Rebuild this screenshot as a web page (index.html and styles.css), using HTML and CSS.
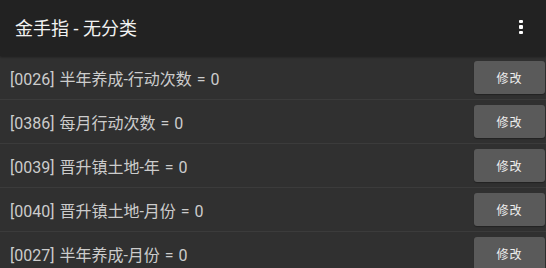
FILE: index.html
```html
<!DOCTYPE html>
<html lang="zh-CN">
<head>
    <meta charset="UTF-8">
    <meta name="viewport" content="width=device-width, initial-scale=1.0">
    <title>金手指 - 无分类</title>
    <link rel="stylesheet" href="styles.css">
</head>
<body>
    <div class="app">
        <div class="toolbar">
            <div class="title">金手指 - 无分类</div>
            <div class="menu">
                <span class="dot"></span>
                <span class="dot"></span>
                <span class="dot"></span>
            </div>
        </div>
        <div class="list">
            <div class="row">
                <div class="label">[0026] 半年养成-行动次数 = 0</div>
                <button class="edit">修改</button>
            </div>
            <div class="row">
                <div class="label">[0386] 每月行动次数 = 0</div>
                <button class="edit">修改</button>
            </div>
            <div class="row">
                <div class="label">[0039] 晋升镇土地-年 = 0</div>
                <button class="edit">修改</button>
            </div>
            <div class="row">
                <div class="label">[0040] 晋升镇土地-月份 = 0</div>
                <button class="edit">修改</button>
            </div>
            <div class="row">
                <div class="label">[0027] 半年养成-月份 = 0</div>
                <button class="edit">修改</button>
            </div>
        </div>
    </div>
</body>
</html>
```

FILE: styles.css
```css
body {
    margin: 0;
    background-color: #303030;
    font-family: Roboto, "Noto Sans CJK SC", sans-serif;
    overflow: hidden;
}

.app {
    width: 546px;
    height: 268px;
    overflow: hidden;
}

.toolbar {
    display: flex;
    align-items: center;
    justify-content: space-between;
    height: 56px;
    padding: 0 0 2px 15px;
    box-sizing: border-box;
    background-color: #222222;
    box-shadow: 0 1px 2px rgba(0, 0, 0, 0.4);
    position: relative;
}

.title {
    color: #f2f2f2;
    font-size: 18px;
    font-weight: 400;
}

.menu {
    display: flex;
    flex-direction: column;
    align-items: center;
    gap: 2px;
    width: 48px;
    padding-right: 1px;
}

.dot {
    width: 3.5px;
    height: 3.5px;
    background-color: #ffffff;
    border-radius: 1px;
}

.row {
    display: flex;
    align-items: center;
    justify-content: space-between;
    height: 43px;
    border-bottom: 1px solid #3b3b3b;
    padding-left: 10px;
    padding-right: 1px;
}

.label {
    color: #cccccc;
    font-size: 16px;
    word-spacing: 1px;
}

.edit {
    width: 71px;
    height: 33px;
    border: none;
    border-radius: 3px;
    background-color: #5a5a5a;
    color: #eeeeee;
    font-family: "Noto Sans CJK SC", sans-serif;
    font-size: 12px;
    letter-spacing: 1px;
    box-shadow: 0 1px 1px rgba(0, 0, 0, 0.3);
}
```
